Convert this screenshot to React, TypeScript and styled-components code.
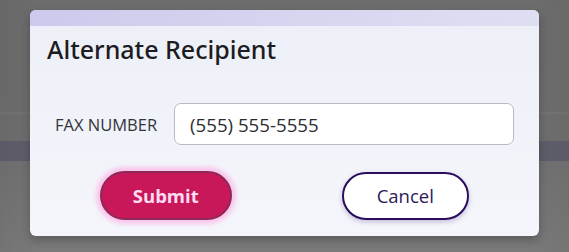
import React from "react";
import styled, { createGlobalStyle } from "styled-components";

const Global = createGlobalStyle`
  html, body { margin: 0; padding: 0; }
  body { font-family: "Open Sans", "Noto Sans", sans-serif; }
  * { box-sizing: border-box; }
`;

const Backdrop = styled.div`
  width: 569px;
  height: 252px;
  overflow: hidden;
  display: flex;
  justify-content: center;
  align-items: flex-start;
  padding-top: 10px;
  background:
    linear-gradient(90deg, rgba(0,0,0,0.05) 0%, rgba(0,0,0,0) 8%, rgba(0,0,0,0) 92%, rgba(0,0,0,0.04) 100%),
    linear-gradient(
      180deg,
      #6d6d6e 0px,
      #6e6e6f 112px,
      #7a7a7c 113px,
      #6f6f70 114px,
      #6f6f70 141px,
      #5f5e6b 141px,
      #5f5e6b 161px,
      #727272 161px,
      #7a7a7a 252px
    );
`;

const Modal = styled.div`
  width: 509px;
  height: 226px;
  border-radius: 6px;
  overflow: hidden;
  background: linear-gradient(180deg, #edeff8 0%, #f4f6fb 100%);
  box-shadow: 0 4px 10px rgba(0, 0, 0, 0.25);
  display: flex;
  flex-direction: column;
`;

const Stripe = styled.div`
  height: 16px;
  flex: none;
  background: linear-gradient(90deg, #cdc9ec 0%, #d6d4ef 50%, #dedff3 100%);
`;

const Title = styled.h2`
  margin: 0;
  padding: 8px 0 0 17px;
  font-family: "Noto Sans", "Open Sans", sans-serif;
  font-size: 25px;
  font-weight: 500;
  line-height: 30px;
  color: #1c1c22;
`;

const FieldRow = styled.div`
  display: flex;
  align-items: center;
  margin-top: 39px;
  padding: 0 25px 0 25px;
`;

const Label = styled.label`
  width: 119px;
  flex: none;
  font-size: 16.5px;
  color: #333338;
  text-transform: uppercase;
`;

const Input = styled.input`
  flex: 1;
  height: 42px;
  border: 1px solid #b9b9c2;
  border-radius: 7px;
  background: #ffffff;
  padding: 0 15px;
  font-family: "Open Sans", "Noto Sans", sans-serif;
  font-size: 18.7px;
  color: #2c2c30;
  outline: none;
`;

const Actions = styled.div`
  display: grid;
  grid-template-columns: 1fr 1fr;
  align-items: center;
  justify-items: center;
  margin-top: 26px;
  padding: 0 17px;
`;

const PillButton = styled.button<{ $variant: "primary" | "secondary" }>`
  height: 49px;
  border-radius: 25px;
  font-family: "Open Sans", "Noto Sans", sans-serif;
  font-size: 18.5px;
  cursor: pointer;
  ${(p) =>
    p.$variant === "primary"
      ? `
    width: 132px;
    background: #c9185a;
    border: 2px solid #8c2a56;
    color: #ffdcf1;
    font-weight: 700;
    box-shadow: 0 0 4px 4px rgba(255, 165, 225, 0.6);
  `
      : `
    width: 127px;
    height: 48px;
    margin-left: 4px;
    background: #ffffff;
    border: 2.5px solid #2a0d5c;
    color: #2b1a58;
    font-weight: 500;
    box-shadow: 0 2px 5px rgba(60, 20, 120, 0.25);
  `}
`;

export default function App() {
  return (
    <>
      <Global />
      <Backdrop>
        <Modal>
          <Stripe />
          <Title>Alternate Recipient</Title>
          <FieldRow>
            <Label htmlFor="fax">Fax Number</Label>
            <Input id="fax" defaultValue="(555) 555-5555" />
          </FieldRow>
          <Actions>
            <PillButton $variant="primary">Submit</PillButton>
            <PillButton $variant="secondary">Cancel</PillButton>
          </Actions>
        </Modal>
      </Backdrop>
    </>
  );
}
